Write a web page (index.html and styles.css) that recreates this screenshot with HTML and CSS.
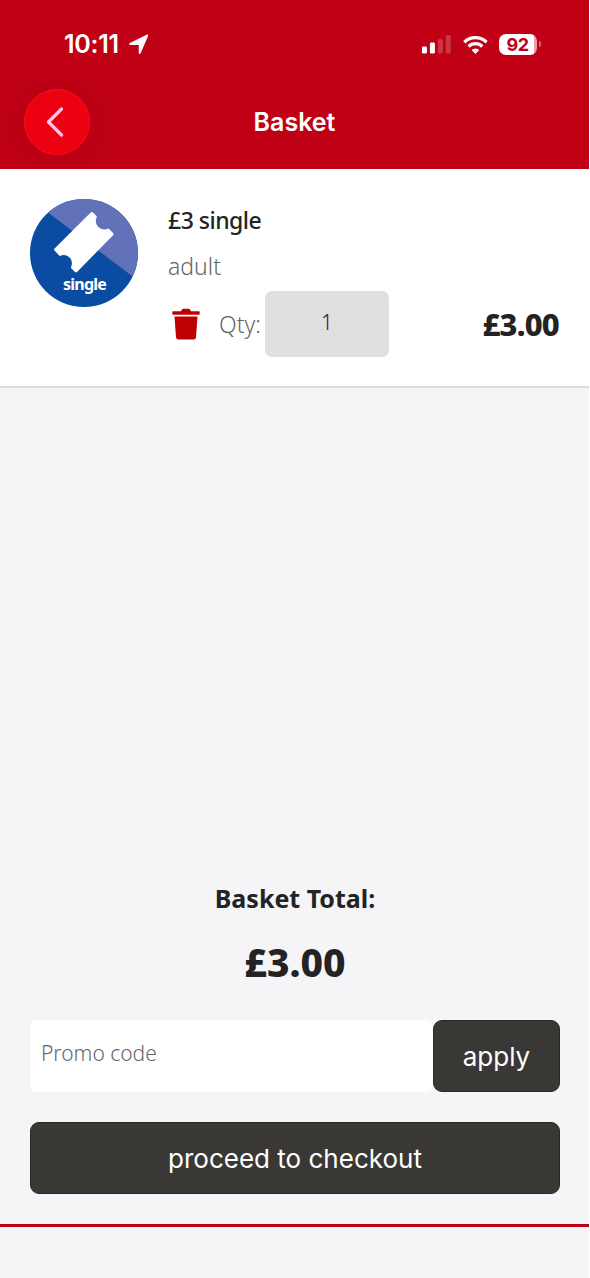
FILE: index.html
```html
<!DOCTYPE html>
<html lang="en">
<head>
<meta charset="utf-8">
<title>Basket</title>
<link rel="stylesheet" href="styles.css">
</head>
<body>
<div class="screen">
  <header class="header">
    <div class="status">
      <span class="time">10:11</span>
      <svg class="location" width="20" height="21" viewBox="0 0 20 21"><path d="M19.4 1.5 11.7 19.3c-.5 1.100-1.900 1-1.900-.3v-8H1.400C0 11-.2 9.400 1 8.900L18.200.5c.9-.4 1.500.2 1.200 1z" fill="#fff"/></svg>
      <svg class="signal" width="30" height="19" viewBox="0 0 30 19"><g fill="#fff"><rect x="0" y="11.500" width="5" height="7" rx="1.300"/><rect x="8" y="7.500" width="5" height="11" rx="1.300"/><g opacity=".2"><rect x="16" y="4" width="5" height="14.500" rx="1.300"/><rect x="24" y="0" width="5" height="18.500" rx="1.300"/></g></g></svg>
      <svg class="wifi" width="25" height="19" viewBox="0 0 25 19"><g fill="none" stroke="#fff" stroke-width="3.300"><path d="M1.300 7.200a16 16 0 0 1 22.400 0"/><path d="M5.600 11.500a9.800 9.800 0 0 1 13.800 0"/></g><path d="M12.500 19 8.600 15.100a5.600 5.600 0 0 1 7.800 0z" fill="#fff"/></svg>
      <div class="battery"><span class="level">92</span></div>
      <span class="battery-tip"></span>
    </div>
    <nav class="navbar">
      <button class="back" aria-label="Back"><svg width="18" height="30" viewBox="0 0 18 30"><path d="M15.500 2 2.500 15l13 13" fill="none" stroke="#ffc4ec" stroke-width="3.200" stroke-linecap="round" stroke-linejoin="round"/></svg></button>
      <h1 class="title">Basket</h1>
    </nav>
  </header>

  <section class="item">
    <svg class="ticket" width="108" height="108" viewBox="0 0 108 108">
      <clipPath id="disc"><circle cx="54" cy="54" r="54"/></clipPath>
      <g clip-path="url(#disc)"><rect width="108" height="108" fill="#0a4ca2"/><path d="M0 0 19 14.300 108 81.500V0z" fill="#6272b9"/></g>
      <path d="M60.700 13.400q1.200-1 2.300.1l3.500 3.600q.5.500.1 1.300c-3.400 7.300 4.500 14.500 11.200 11.300q.8-.3 1.300.2l4.200 4.300q.8.900 0 1.800L47.300 72.700q-1.200 1.200-2.300.2l-3.600-3.500q-.6-.6-.3-1.300c3.300-7.400-3.800-14.300-10.700-11.300q-.7.300-1.200-.2l-4.700-5.100q-.8-1 .1-1.900z" fill="#fff"/>
      <text class="ticket-label" x="54.500" y="91" text-anchor="middle">single</text>
    </svg>
    <div class="details">
      <h2 class="name">£3 single</h2>
      <p class="type">adult</p>
      <div class="row">
        <svg class="trash" width="28" height="32" viewBox="0 0 28 32"><path d="M1 3.300h8l1.200-2q.4-.5 1-.5h5.600q.6 0 1 .5l1.200 2h8q.7 0 .7.700v2q0 .7-.7.700H1Q.3 6.700.3 6V4Q.3 3.300 1 3.300zM2.500 8.400h23L24 29.200q-.2 2.200-2.400 2.200H6.400Q4.200 31.400 4 29.200z" fill="#be0000"/></svg>
        <span class="qty-label">Qty:</span>
        <span class="qty">1</span>
        <strong class="price">£3.00</strong>
      </div>
    </div>
  </section>

  <section class="summary">
    <h2 class="total-label">Basket Total:</h2>
    <strong class="total">£3.00</strong>
    <div class="promo">
      <div class="promo-input">Promo code</div>
      <button class="button apply">apply</button>
    </div>
    <button class="button checkout"><span class="checkout-text">proceed to checkout</span></button>
  </section>
  <footer class="footer"></footer>
</div>
</body>
</html>
```
FILE: styles.css
```css
* { box-sizing: border-box; }
body { margin: 0; background: #fff; }
h1, h2, p { margin: 0; }
button { border: 0; padding: 0; }
.screen {
  width: 589px;
  height: 1278px;
  display: flex;
  flex-direction: column;
  background: #f5f5f8;
  color: #232323;
  font-family: "Noto Sans", sans-serif;
  overflow: hidden;
}
.header {
  height: 169px;
  flex: none;
  background: #c00015;
  color: #fff;
  font-family: Inter, sans-serif;
}
.status {
  height: 88px;
  padding: 0 48px 0 64px;
  display: flex;
  align-items: center;
}
.time { width: 65px; font-size: 25px; line-height: 30px; font-weight: 600; letter-spacing: -.3px; }
.signal { margin-left: 274px; }
.wifi { margin-left: 11px; }
.battery {
  width: 38px;
  height: 21px;
  margin-left: 11px;
  flex: none;
  border-radius: 7px;
  background: linear-gradient(90deg, #fff 92%, #ee9eaa 92%);
  color: #c00015;
  text-align: center;
}
.level { display: block; margin-right: 1px; font-size: 18px; line-height: 21px; font-weight: 700; letter-spacing: -.5px; }
.battery-tip { width: 2px; height: 6px; margin-left: 2px; flex: none; border-radius: 0 3px 3px 0; background: #e05c6d; }
.navbar { height: 67px; padding: 0 24px; display: grid; grid-template-columns: 66px 1fr 66px; align-items: center; }
.back {
  width: 66px;
  height: 66px;
  border-radius: 50%;
  border: 1px solid #f81024;
  background: #ed0010;
  box-shadow: 0 4px 36px 5px rgba(80, 0, 0, .08);
  display: grid;
  place-items: center;
  padding-right: 4px;
}
.title { text-align: center; font-size: 25px; line-height: 34px; font-weight: 600; }
.item {
  height: 219px;
  flex: none;
  display: flex;
  gap: 30px;
  padding: 30px 30px 0;
  background: #fff;
  border-bottom: 2px solid #dcdce0;
}
.ticket { flex: none; }
.ticket-label { fill: #fff; font: 700 16px "Noto Sans", sans-serif; letter-spacing: -.8px; }
.details { flex: 1; }
.name { height: 46px; font-size: 23px; line-height: 42px; font-weight: 500; letter-spacing: -.5px; }
.type { height: 46px; color: #666; font-size: 23px; line-height: 42px; font-weight: 300; }
.row { height: 66px; display: flex; align-items: center; }
.trash { margin-left: 4px; }
.qty-label { width: 46px; margin-left: 19px; color: #666; font-size: 23px; font-weight: 300; line-height: 32px; white-space: nowrap; }
.qty {
  width: 124px;
  height: 66px;
  padding-bottom: 5px;
  display: grid;
  place-items: center;
  border-radius: 7px;
  background: #e0e0e0;
  font-size: 21px;
  font-weight: 300;
}
.price { margin-left: auto; font-size: 31px; line-height: 40px; font-weight: 800; letter-spacing: -.8px; }
.summary {
  height: 836px;
  flex: none;
  padding: 0 29px 30px 30px;
  display: flex;
  flex-direction: column;
  justify-content: flex-end;
  align-items: stretch;
  text-align: center;
}
.total-label { font-size: 25px; line-height: 36px; font-weight: 700; }
.total { margin-top: 18px; margin-bottom: 30px; font-size: 39px; line-height: 56px; font-weight: 800; }
.promo { height: 72px; margin-bottom: 30px; display: flex; }
.promo-input {
  flex: 1;
  padding: 0 11px 5px;
  border-radius: 7px;
  background: #fff;
  color: #666;
  font-size: 21px;
  line-height: 67px;
  font-weight: 300;
  text-align: left;
}
.button {
  height: 72px;
  border: 1px solid #2c2a27;
  border-radius: 9px;
  background: #3a3835;
  color: #fff;
  font: 400 26px Inter, sans-serif;
}
.apply { width: 127px; }
.footer { flex: 1; border-top: 3px solid #c00015; }
```
